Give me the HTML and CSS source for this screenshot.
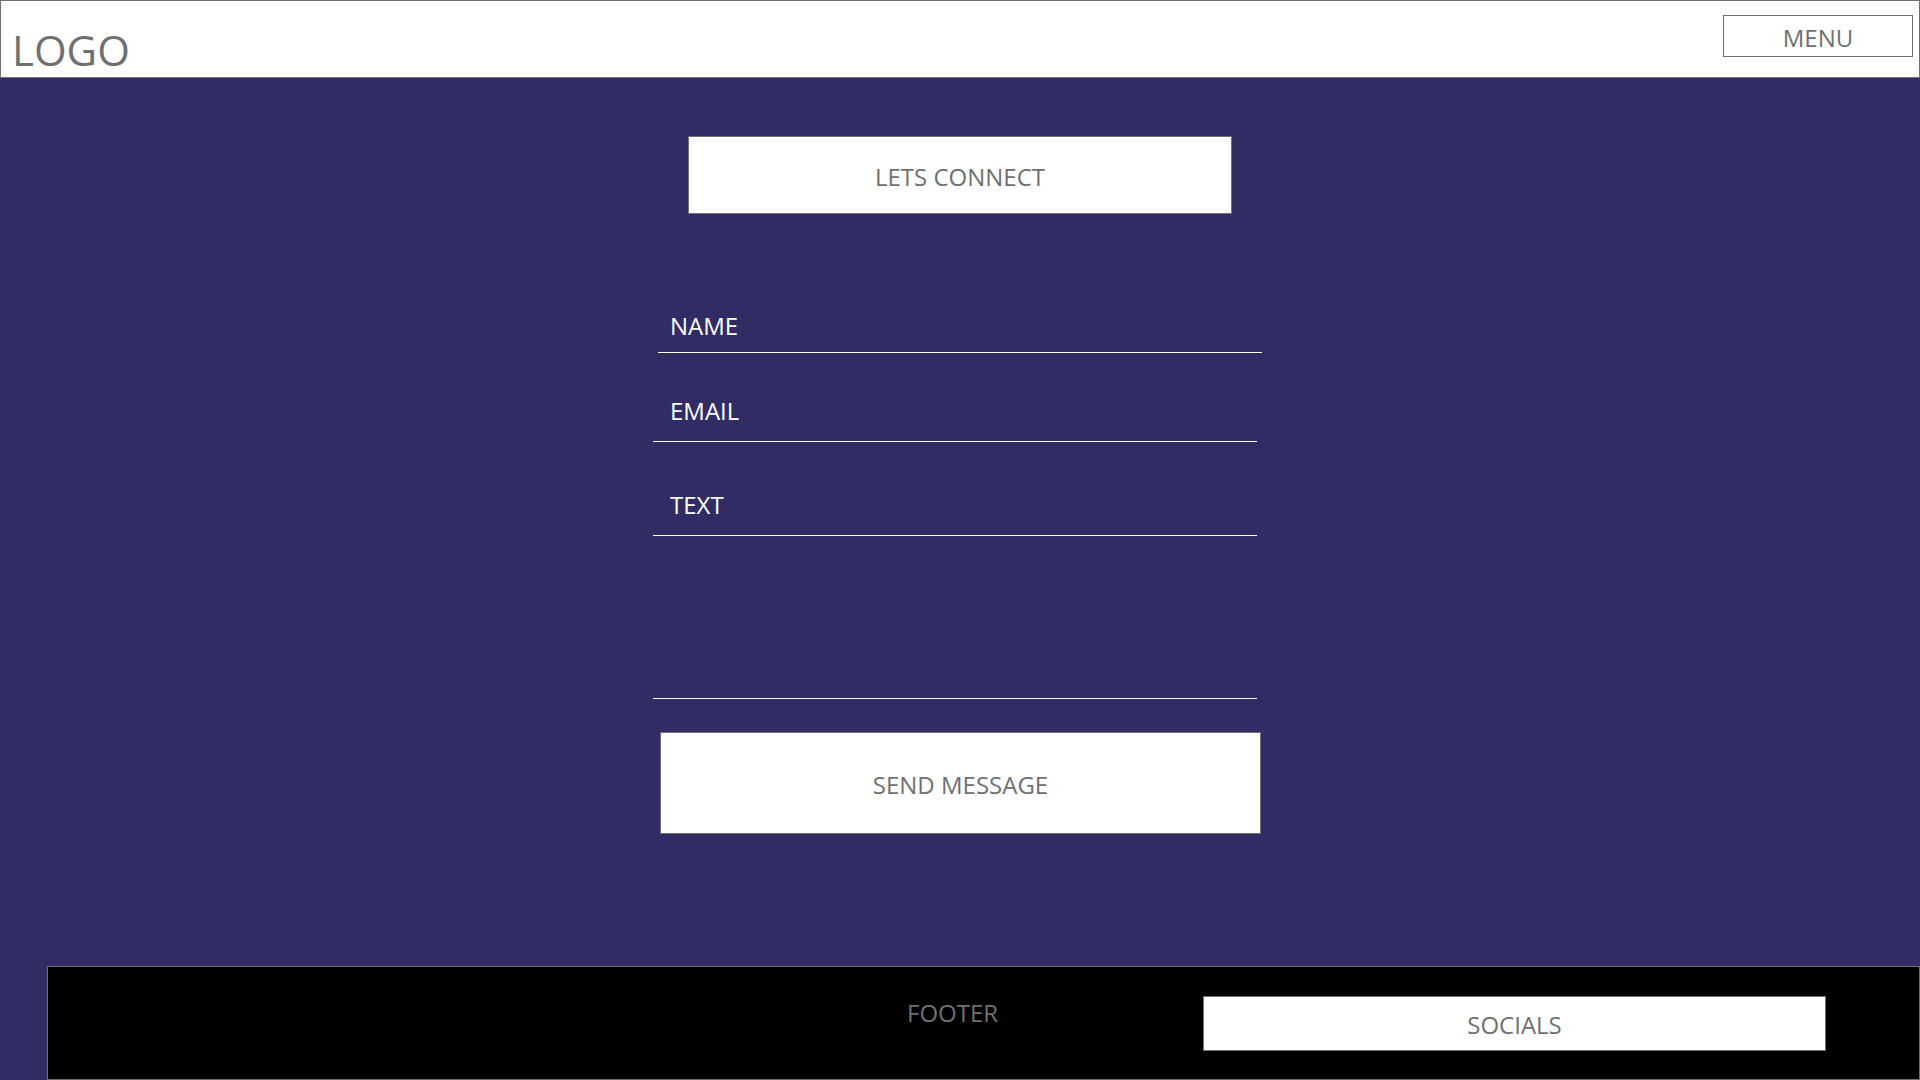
FILE: index.html
```html
<!DOCTYPE html>
<html lang="en">
<head>
<meta charset="utf-8">
<title>Lets Connect</title>
<link rel="stylesheet" href="styles.css">
</head>
<body>
  <header class="site-header">
    <div class="logo">LOGO</div>
    <div class="menu-btn">MENU</div>
  </header>
  <main class="contact">
    <div class="title-box">LETS CONNECT</div>
    <div class="contact-form">
      <div class="field field-name">NAME</div>
      <div class="field field-email">EMAIL</div>
      <div class="field field-text">TEXT</div>
      <div class="field-area"></div>
      <div class="send-btn">SEND MESSAGE</div>
    </div>
  </main>
  <footer class="site-footer">
    <div class="footer-label">FOOTER</div>
    <div class="socials">SOCIALS</div>
  </footer>
</body>
</html>
```

FILE: styles.css
```css
* {
  box-sizing: border-box;
  margin: 0;
  padding: 0;
}

html, body {
  width: 1920px;
  height: 1080px;
  overflow: hidden;
}

body {
  background: #312c63;
  font-family: "Open Sans", "Noto Sans", sans-serif;
  color: #707070;
  display: flex;
  flex-direction: column;
}

.site-header {
  height: 78px;
  flex: none;
  background: #fff;
  border: 1px solid #707070;
  display: flex;
  justify-content: space-between;
  align-items: flex-start;
}

.logo {
  font-size: 42px;
  line-height: 44px;
  margin: 27px 0 0 11px;
}

.menu-btn {
  width: 190px;
  height: 42px;
  margin: 14px 6px 0 0;
  padding-top: 3px;
  border: 1px solid #707070;
  background: #fff;
  font-size: 24px;
  display: flex;
  align-items: center;
  justify-content: center;
}

.contact {
  display: flex;
  flex-direction: column;
  align-items: center;
  padding-top: 58px;
}

.title-box {
  width: 544px;
  height: 78px;
  padding-top: 3px;
  background: #fff;
  border: 1px solid #707070;
  font-size: 24px;
  display: flex;
  align-items: center;
  justify-content: center;
}

.contact-form {
  width: 614px;
  margin-top: 95px;
  display: flex;
  flex-direction: column;
}

.field {
  color: #fff;
  font-size: 24px;
  line-height: 34px;
  border-bottom: 1px solid #fff;
  width: 604px;
}

.field-name {
  margin-left: 5px;
  padding: 0 0 9px 12px;
}

.field-email {
  margin-top: 41px;
  padding: 0 0 13px 17px;
}

.field-text {
  margin-top: 46px;
  padding: 0 0 13px 17px;
}

.field-area {
  width: 604px;
  height: 163px;
  border-bottom: 1px solid #fff;
}

.send-btn {
  margin: 33px 0 0 7px;
  width: 601px;
  height: 102px;
  padding-top: 3px;
  background: #fff;
  border: 1px solid #707070;
  font-size: 24px;
  display: flex;
  align-items: center;
  justify-content: center;
}

.site-footer {
  margin-top: auto;
  margin-left: 47px;
  height: 114px;
  flex: none;
  background: #000;
  border: 1px solid #707070;
  display: flex;
  align-items: flex-start;
  padding-top: 29px;
}

.footer-label {
  margin-left: 859px;
  font-size: 24px;
  line-height: 34px;
}

.socials {
  margin-left: auto;
  margin-right: 93px;
  width: 623px;
  height: 55px;
  padding-top: 2px;
  background: #fff;
  border: 1px solid #707070;
  font-size: 24px;
  display: flex;
  align-items: center;
  justify-content: center;
}
```
